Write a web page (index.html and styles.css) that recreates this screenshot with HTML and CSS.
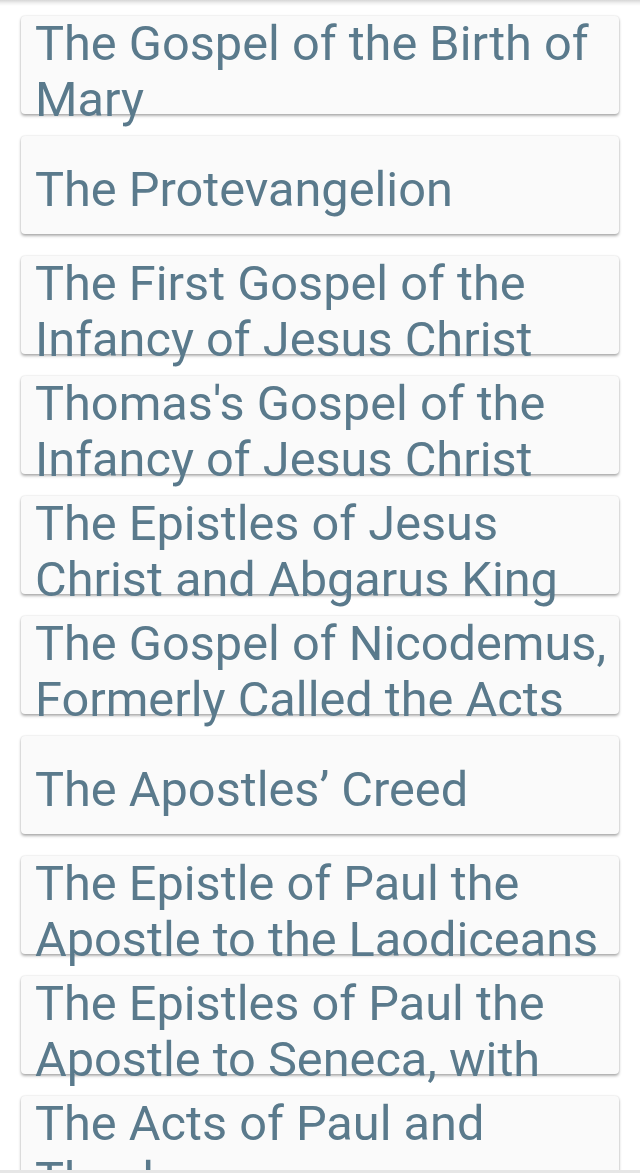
FILE: index.html
```html
<!DOCTYPE html>
<html lang="en">
<head>
<meta charset="utf-8">
<title>Books</title>
<link rel="stylesheet" href="styles.css">
</head>
<body>
<div class="screen">
  <div class="appbar-shadow"></div>
  <ul class="list">
    <li class="card card-prev"><span class="title"></span></li>
    <li class="card"><span class="title">The Gospel of the Birth of Mary</span></li>
    <li class="card card--one-line"><span class="title">The Protevangelion</span></li>
    <li class="card"><span class="title">The First Gospel of the Infancy of Jesus Christ</span></li>
    <li class="card"><span class="title">Thomas's Gospel of the Infancy of Jesus Christ</span></li>
    <li class="card"><span class="title">The Epistles of Jesus Christ and Abgarus King</span></li>
    <li class="card"><span class="title">The Gospel of Nicodemus, Formerly Called the Acts</span></li>
    <li class="card card--one-line"><span class="title">The Apostles’ Creed</span></li>
    <li class="card"><span class="title">The Epistle of Paul the Apostle to the Laodiceans</span></li>
    <li class="card"><span class="title">The Epistles of Paul the Apostle to Seneca, with</span></li>
    <li class="card"><span class="title">The Acts of Paul and Thecla</span></li>
  </ul>
</div>
<div class="navbar"></div>
</body>
</html>
```

FILE: styles.css
```css
html, body {
  margin: 0;
  padding: 0;
  background: #ffffff;
}

.screen {
  position: relative;
  height: 1170px;
  overflow: hidden;
}

.appbar-shadow {
  position: absolute;
  top: 0;
  left: 0;
  right: 0;
  height: 6px;
  background: linear-gradient(rgba(0, 0, 0, 0.16), rgba(0, 0, 0, 0.06) 50%, rgba(0, 0, 0, 0));
  z-index: 1;
}

.list {
  list-style: none;
  margin: 0;
  padding: 0 21px;
  display: flex;
  flex-direction: column;
  gap: 22px;
}

.card {
  height: 98px;
  box-sizing: border-box;
  background: #fafafa;
  border-radius: 4px;
  box-shadow: 0 2px 3px rgba(0, 0, 0, 0.3), 0 0 2px rgba(0, 0, 0, 0.15);
  padding: 0 10px 0 14px;
  display: flex;
  flex-direction: column;
}

.card--one-line {
  padding-top: 10px;
}

.card-prev {
  margin-top: -104px;
}

.title {
  margin: auto 0;
  font-family: Roboto, "Noto Sans", sans-serif;
  font-size: 48.7px;
  line-height: 56px;
  color: #5a7a8c;
  flex-shrink: 0;
}

.navbar {
  height: 3px;
  background: #e6e6e6;
}
```
